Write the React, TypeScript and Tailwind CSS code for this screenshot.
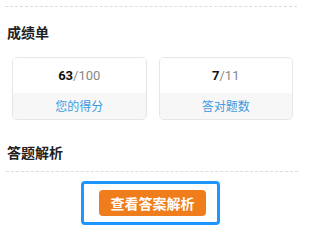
export default function App() {
  const font = { fontFamily: '"Noto Sans CJK SC", "Noto Sans", sans-serif' };
  return (
    <div className="w-[305px] h-[236px] bg-white overflow-hidden" style={font}>
      <div className="ml-[5px] mr-[8px] mt-[6px] border-t border-dashed border-[#dcdcdc]" />
      <div className="pl-[7px] pt-[15px] text-[14px] leading-[20px] font-semibold text-[#222]">成绩单</div>
      <div className="grid grid-cols-2 gap-[12px] px-[12px] mt-[15px]">
        <Card main="63" total="/100" label="您的得分" />
        <Card main="7" total="/11" label="答对题数" />
      </div>
      <div className="pl-[7px] mt-[22px] text-[14px] leading-[20px] font-semibold text-[#222]">答题解析</div>
      <div className="ml-[6px] mr-[7px] mt-[9px] border-t border-dashed border-[#dcdcdc]" />
      <div className="flex justify-center pr-[4px] mt-[9px]">
        <div className="border-[3px] border-[#1e96ff] rounded-[4px] pl-[15px] pr-[11px] py-[6px]">
          <div className="w-[107px] h-[26px] rounded-[4px] bg-[#ef7d1b] flex items-center justify-center text-white text-[14px] font-semibold">
            查看答案解析
          </div>
        </div>
      </div>
    </div>
  );
}

function Card({ main, total, label }: { main: string; total: string; label: string }) {
  return (
    <div className="h-[63px] rounded-[5px] border border-[#e6e6e6] overflow-hidden flex flex-col">
      <div className="h-[35px] flex items-center justify-center text-[13px] bg-white font-['Roboto',sans-serif]">
        <span className="font-bold text-[#111]">{main}</span>
        <span className="text-[#888]">{total}</span>
      </div>
      <div className="flex-1 bg-[#f7f7f7] flex items-center justify-center text-[12px] text-[#3d9be0]">
        {label}
      </div>
    </div>
  );
}
